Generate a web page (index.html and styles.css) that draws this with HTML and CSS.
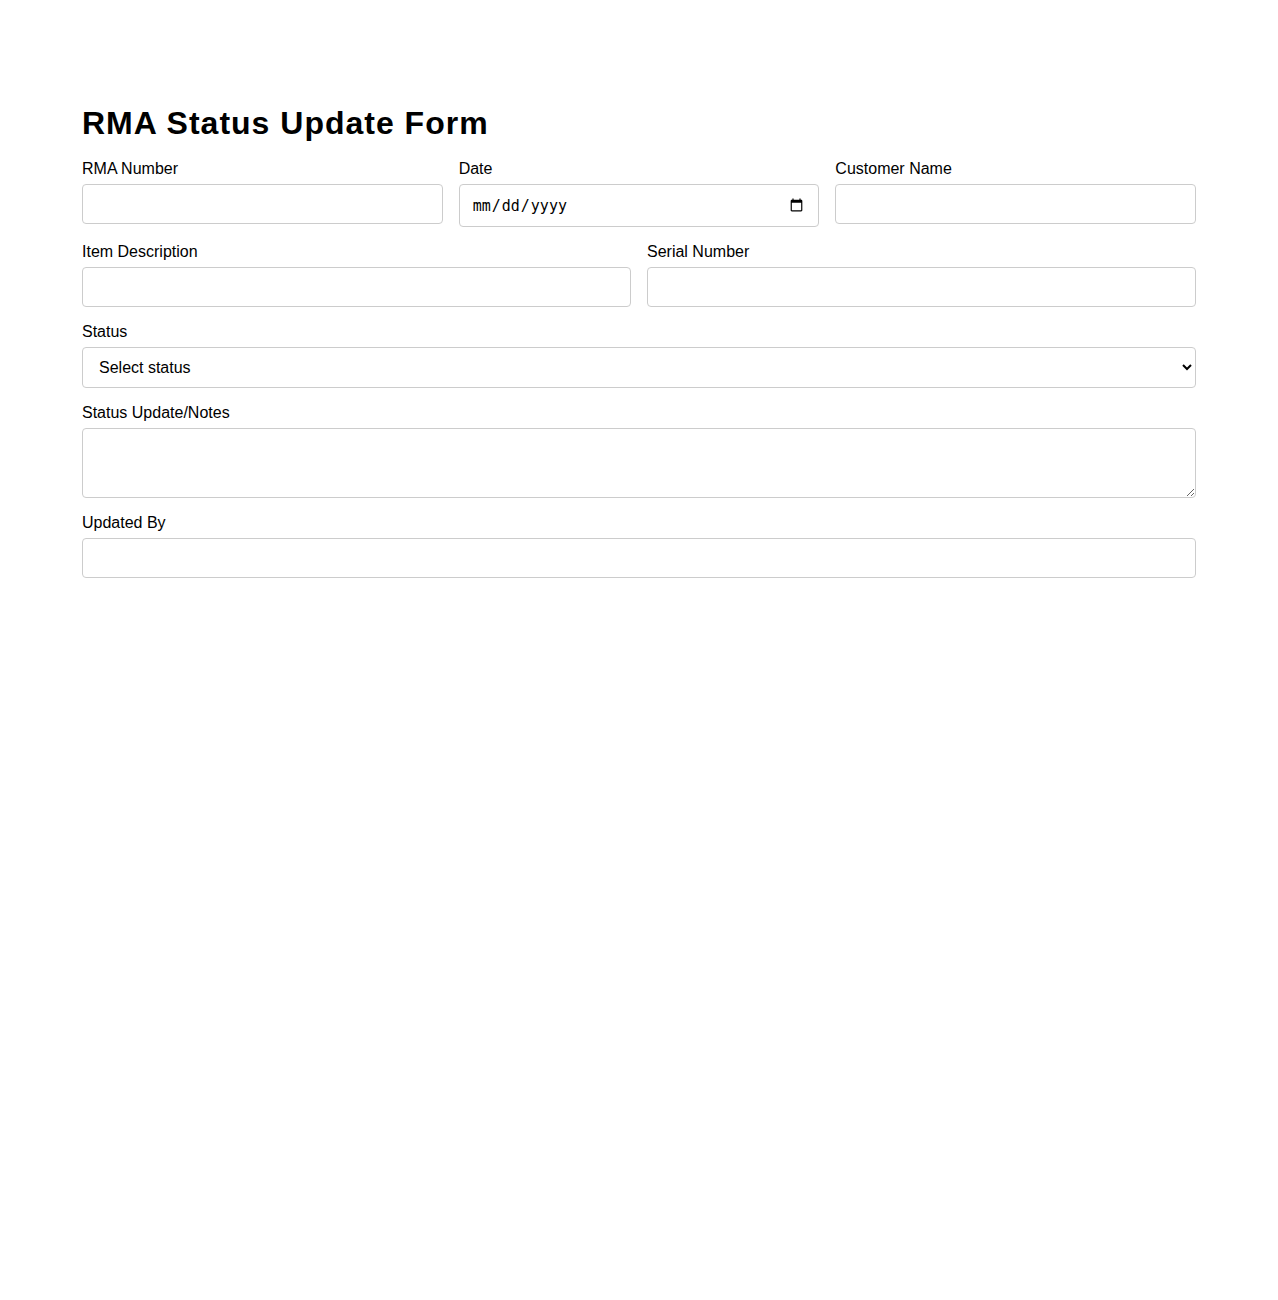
FILE: index.html
```html
<!DOCTYPE html>
<html lang="en">
<head>
    <meta charset="UTF-8">
    <meta name="viewport" content="width=device-width, initial-scale=1.0">
    <title>RMA Status Update Form</title>
    <link rel="stylesheet" href="styles.css">
</head>
<body>

    <div class="container">
        <h1>RMA Status Update Form</h1>

        <form id="rmaForm">
            <!-- first row: number, date, customer -->
            <div class="row row-3">
                <div class="field">
                    <label for="rmaNumber">RMA Number</label>
                    <input type="text" id="rmaNumber" name="rmaNumber">
                </div>
                <div class="field">
                    <label for="rmaDate">Date</label>
                    <input type="date" id="rmaDate" name="date">
                </div>
                <div class="field">
                    <label for="customerName">Customer Name</label>
                    <input type="text" id="customerName" name="customerName">
                </div>
            </div>

            <!-- second row: item and serial -->
            <div class="row row-2">
                <div class="field">
                    <label for="itemDescription">Item Description</label>
                    <input type="text" id="itemDescription" name="itemDescription">
                </div>
                <div class="field">
                    <label for="serialNumber">Serial Number</label>
                    <input type="text" id="serialNumber" name="serialNumber">
                </div>
            </div>

            <div class="field">
                <label for="status">Status</label>
                <select id="status" name="status">
                    <option value="">Select status</option>
                    <option value="received">Received</option>
                    <option value="inspection">In Inspection</option>
                    <option value="repair">In Repair</option>
                    <option value="shipped">Shipped</option>
                    <option value="closed">Closed</option>
                </select>
            </div>

            <div class="field">
                <label for="notes">Status Update/Notes</label>
                <textarea id="notes" name="notes"></textarea>
            </div>

            <div class="field">
                <label for="updatedBy">Updated By</label>
                <input type="text" id="updatedBy" name="updatedBy">
            </div>
        </form>
    </div>

</body>
</html>
```

FILE: styles.css
```css
/* page base */
body {
    font-family: "Liberation Sans", Arial, sans-serif;
    background-color: #fff;
    color: #000;
    margin: 0;
}

.container {
    max-width: 1114px;
    margin: 0 auto;
    padding: 105px 0 40px;
}

h1 {
    font-size: 32px;
    letter-spacing: 1px;
    margin: 0 0 18px;
}

/* rows of fields */
.row {
    display: grid;
    gap: 16px;
}

.row-3 {
    grid-template-columns: 1fr 1fr 1fr;
}

.row-2 {
    grid-template-columns: 1fr 1fr;
}

.field {
    margin-bottom: 16px;
}

label {
    display: block;
    font-size: 16px;
    margin-bottom: 6px;
}

input, select, textarea {
    display: block;
    width: 100%;
    box-sizing: border-box;
    padding: 10px 12px;
    border: 1px solid #ccc;
    border-radius: 4px;
    font-family: "Liberation Sans", Arial, sans-serif;
    font-size: 16px;
    background-color: #fff;
}

/* date picker sits a little taller than the text fields */
input[type="date"] {
    height: 43px;
    font-family: "DejaVu Sans Mono", monospace;
    font-size: 15px;
}

textarea {
    height: 70px;
}
```
